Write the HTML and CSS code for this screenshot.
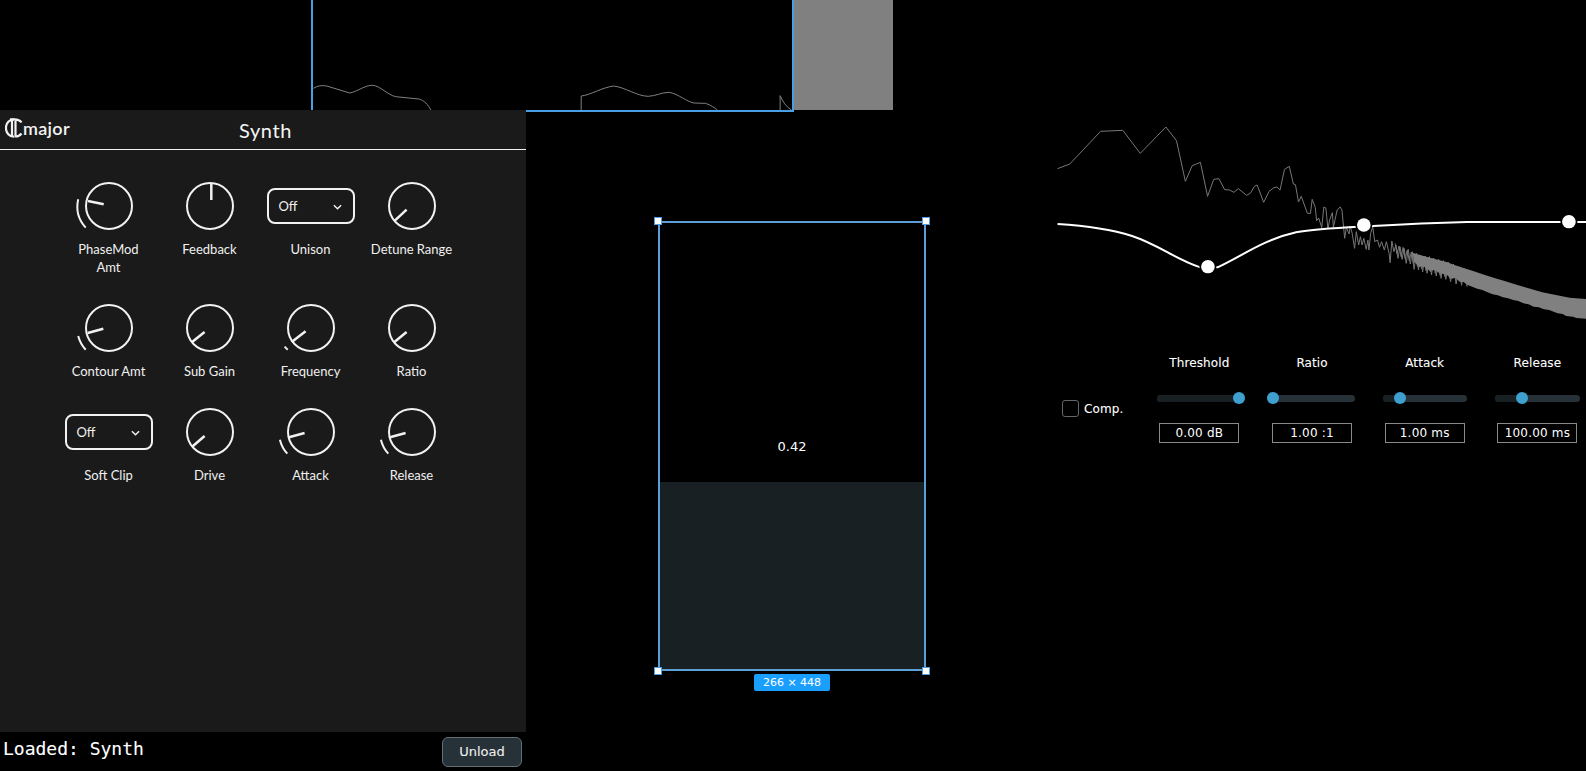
FILE: index.html
```html
<!DOCTYPE html>
<html lang="en">
<head>
  <meta charset="UTF-8">
  <title>Synth</title>
  <link rel="stylesheet" href="styles.css">
</head>
<body>
  <div class="stage">

    <!-- waveform -->
    <div class="wave-pane">
      <div class="wave-box">
        <svg class="wave-svg" viewBox="34 0 1252 330" preserveAspectRatio="none">
          <path d="M35,265 C45,258 55,255 70,258 L130,279 C150,275 170,255 190,256 C210,258 230,285 250,290 L310,297 C325,300 335,315 342,330"/>
          <path d="M735,330 L735,288 C760,285 790,262 820,258 C850,262 880,288 910,289 C930,288 945,277 965,277 C990,282 1010,305 1030,309 L1060,310 C1075,315 1085,325 1091,330"/>
          <path d="M1255,330 L1255,287 C1262,305 1270,320 1285,330"/>
        </svg>
      </div>
      <div class="wave-rest"></div>
    </div>

    <!-- synth panel -->
    <section class="synth">
      <header class="synth-head">
        <div class="logo">
          <svg class="logo-mark" viewBox="0 0 18 20">
            <path d="M9,1.3 A8,8.6 0 1 0 9,18.7"/>
            <path d="M5,1.3 H9 C12,1.3 15,2 16.5,4.5 M7,1.5 V18 M10.5,1.5 V18.5 C13,18.5 15,17.5 16.5,15.5"/>
          </svg>
          <span>major</span>
        </div>
        <div class="synth-title">Synth</div>
        <div></div>
      </header>

      <div class="controls">
        <div class="control">
          <svg class="knob" viewBox="-24 -24 48 48">
            <circle r="23"/>
            <path class="arc" d="M-23.3,21.7 A31.8,31.8 0 0 1 -30.8,-6.7"/>
            <path class="hand" d="M-21,-5 L-5.3,-1.7"/>
          </svg>
          <div class="control-label">PhaseMod<br>Amt</div>
        </div>
        <div class="control">
          <svg class="knob" viewBox="-24 -24 48 48">
            <circle r="23"/>
            <path class="hand" d="M1.3,-22 V-6"/>
          </svg>
          <div class="control-label">Feedback</div>
        </div>
        <div class="control">
          <div class="select-wrap">
            <div class="select">
              <span>Off</span>
              <svg class="chevron" viewBox="0 0 10 6"><path d="M1,1 L5,5 L9,1"/></svg>
            </div>
          </div>
          <div class="control-label">Unison</div>
        </div>
        <div class="control">
          <svg class="knob" viewBox="-24 -24 48 48">
            <circle r="23"/>
            <path class="hand" d="M-17.2,14.7 L-5.4,3.7"/>
          </svg>
          <div class="control-label">Detune Range</div>
        </div>

        <div class="control">
          <svg class="knob" viewBox="-24 -24 48 48">
            <circle r="23"/>
            <path class="arc" d="M-23.3,21.7 A31.8,31.8 0 0 1 -30.8,8"/>
            <path class="hand" d="M-21.3,5 L-5.7,0.7"/>
          </svg>
          <div class="control-label">Contour Amt</div>
        </div>
        <div class="control">
          <svg class="knob" viewBox="-24 -24 48 48">
            <circle r="23"/>
            <path class="hand" d="M-17.9,14 L-5.4,4"/>
          </svg>
          <div class="control-label">Sub Gain</div>
        </div>
        <div class="control">
          <svg class="knob" viewBox="-24 -24 48 48">
            <circle r="23"/>
            <path class="arc" d="M-23.3,21.7 A31.8,31.8 0 0 1 -26.4,18.7"/>
            <path class="hand" d="M-19.3,14 L-5.4,3.3"/>
          </svg>
          <div class="control-label">Frequency</div>
        </div>
        <div class="control">
          <svg class="knob" viewBox="-24 -24 48 48">
            <circle r="23"/>
            <path class="hand" d="M-17.9,14.3 L-5.4,4"/>
          </svg>
          <div class="control-label">Ratio</div>
        </div>

        <div class="control">
          <div class="select-wrap">
            <div class="select">
              <span>Off</span>
              <svg class="chevron" viewBox="0 0 10 6"><path d="M1,1 L5,5 L9,1"/></svg>
            </div>
          </div>
          <div class="control-label">Soft Clip</div>
        </div>
        <div class="control">
          <svg class="knob" viewBox="-24 -24 48 48">
            <circle r="23"/>
            <path class="hand" d="M-17.9,14.7 L-5.4,4"/>
          </svg>
          <div class="control-label">Drive</div>
        </div>
        <div class="control">
          <svg class="knob" viewBox="-24 -24 48 48">
            <circle r="23"/>
            <path class="arc" d="M-23.7,21.7 A32,32 0 0 1 -31.1,7.7"/>
            <path class="hand" d="M-22,5.3 L-6.4,1"/>
          </svg>
          <div class="control-label">Attack</div>
        </div>
        <div class="control">
          <svg class="knob" viewBox="-24 -24 48 48">
            <circle r="23"/>
            <path class="arc" d="M-23.7,21.7 A32,32 0 0 1 -31.1,7.7"/>
            <path class="hand" d="M-22,5.3 L-6.4,1"/>
          </svg>
          <div class="control-label">Release</div>
        </div>
      </div>
    </section>

    <!-- resizable value box -->
    <div class="resize-pane">
      <div class="resize-box">
        <div class="resize-value">0.42</div>
        <div class="resize-fill" style="height: 42%"></div>
        <span class="handle handle-tl"></span>
        <span class="handle handle-tr"></span>
        <span class="handle handle-bl"></span>
        <span class="handle handle-br"></span>
      </div>
      <div class="size-badge">266 × 448</div>
    </div>

    <!-- eq + compressor -->
    <div class="eq-pane">
      <svg class="eq-svg" viewBox="0 0 1568 660" preserveAspectRatio="none">
        <polyline class="spectrum" points="22,176 58,162 148,64 213,61 264,130 339,51 370,92 396,214 416,167 440,157 461,259 479,208 494,206 511,239 525,240 538,247 551,236 575,256 586,250 598,229 606,225 625,277 641,244 655,233 664,231 673,240 686,178 700,169 712,222 718,224 727,276 735,259 753,310 762,310 767,268 776,292 780,332 786,324 795,353 801,291 807,294 813,357 818,330 826,308 829,352 840,300 849,291 854,300 862,385 867,352 875,372 878,348 884,370 891,415 896,365 903,405 908,380 913,405 918,385 925,418 930,390 933,420 938,370 944,350 950,395 958,390 964,412 970,395 978,420 984,395 992,430 995,458 1000,393 1006,425 1012,405 1018,445 1024,410 1030,448 1036,415 1042,460 1048,418 1054,462 1060,425 1065,478 1072,430 1078,480 1084,435 1090,486 1097,438 1103,490 1110,440 1116,495 1123,445 1130,498 1137,448 1144,505 1151,452 1158,508 1165,456 1172,515 1180,462 1188,522 1196,470 1204,526 1212,476 1220,530"/>
        <polyline class="spectrum" points="1010,400 1015,432 1021,408 1027,440 1033,412 1039,446 1045,420 1051,452 1057,426 1063,462 1069,432 1075,470 1081,436 1087,476 1094,440 1100,482 1107,442 1113,486 1120,446 1127,490 1134,450 1141,496 1148,454 1155,500 1162,458 1169,506"/>
        <polygon class="spectrum-band" points="1060,428 1100,440 1160,456 1185,466 1210,474 1240,484 1270,494 1300,504 1330,513 1360,523 1400,535 1440,547 1480,555 1520,563 1568,567 1568,626 1540,624 1530,620 1510,618 1500,612 1485,610 1460,600 1445,598 1430,592 1415,590 1400,583 1385,580 1370,573 1355,570 1340,565 1325,562 1310,556 1295,553 1280,547 1265,540 1250,536 1235,530 1220,524 1210,516 1200,516 1185,504 1175,506 1160,494 1140,490 1125,480 1110,482 1095,470 1080,470 1065,455"/>
        <path class="curve" d="M22,342 C100,347 170,355 240,378 C320,405 370,450 440,472 L490,472 C560,440 620,390 720,367 C780,355 850,353 945,348 C1050,342 1150,338 1220,336 L1568,336"/>
        <circle class="node" cx="462" cy="470" r="20"/>
        <circle class="node" cx="918" cy="345" r="20"/>
        <circle class="node" cx="1518" cy="335" r="20"/>
      </svg>

      <div class="comp">
        <label class="comp-toggle"><span class="checkbox"></span>Comp.</label>
        <div class="comp-params">
          <div class="param">
            <div class="param-label">Threshold</div>
            <div class="track track-threshold"><div class="track-fill" style="width: 100%"></div><span class="thumb" style="left: 93%"></span></div>
            <div class="param-value">0.00 dB</div>
          </div>
          <div class="param">
            <div class="param-label">Ratio</div>
            <div class="track track-ratio"><div class="track-fill" style="width: 7%"></div><span class="thumb" style="left: 7%"></span></div>
            <div class="param-value">1.00 :1</div>
          </div>
          <div class="param">
            <div class="param-label">Attack</div>
            <div class="track track-attack"><div class="track-fill" style="width: 20%"></div><span class="thumb" style="left: 20%"></span></div>
            <div class="param-value">1.00 ms</div>
          </div>
          <div class="param">
            <div class="param-label">Release</div>
            <div class="track track-release"><div class="track-fill" style="width: 32%"></div><span class="thumb" style="left: 32%"></span></div>
            <div class="param-value">100.00 ms</div>
          </div>
        </div>
      </div>
    </div>

    <!-- status -->
    <footer class="status">
      <div class="status-text">Loaded: Synth</div>
      <button class="unload">Unload</button>
    </footer>
  </div>
</body>
</html>
```

FILE: styles.css
```css
html, body { margin: 0; padding: 0; height: 100%; background: #000; overflow: hidden; }
body { font-family: "DejaVu Sans", sans-serif; color: #fff; }

.stage {
  display: grid;
  grid-template-columns: 526px 524px 536px;
  grid-template-rows: 110px 622px 39px;
  height: 771px;
}

/* waveform */
.wave-pane { grid-column: 1 / 3; grid-row: 1; display: flex; align-items: flex-start; margin-left: 311px; }
.wave-box { width: 483px; height: 112px; box-sizing: border-box; border: 2px solid #4a9ee6; border-top: none; flex: none; }
.wave-svg { display: block; width: 479px; height: 110px; }
.wave-svg path { fill: none; stroke: #808080; stroke-width: 1; vector-effect: non-scaling-stroke; }
.wave-rest { width: 99px; height: 110px; background: #808080; }

/* synth panel */
.synth { grid-column: 1; grid-row: 2; background: #1a1a1a; position: relative; }
.synth-head { display: grid; grid-template-columns: 1fr auto 1fr; align-items: center; height: 39px; border-bottom: 1.5px solid #f2f2f2; padding-left: 5px; }
.logo { display: flex; align-items: center; font-family: Lato, sans-serif; font-weight: 600; font-size: 18px; letter-spacing: .3px; color: #f2f2f2; margin-top: -4px; }
.logo-mark { width: 18px; height: 20px; flex: none; }
.logo-mark path { fill: none; stroke: #f2f2f2; stroke-width: 2.2; }
.synth-title { font-family: Lato, sans-serif; font-size: 20px; letter-spacing: .6px; color: #f5f5f5; }

.controls { display: grid; grid-template-columns: repeat(4, 101px); row-gap: 28px; padding: 32px 0 0 58px; }
.control { display: flex; flex-direction: column; align-items: center; }
.control-label { margin-top: 10px; font-family: Lato, sans-serif; font-size: 13px; line-height: 18px; text-align: center; color: #f0f0f0; white-space: nowrap; }

.knob { width: 48px; height: 48px; overflow: visible; display: block; }
.knob circle { fill: none; stroke: #f2f2f2; stroke-width: 2; }
.knob .hand { fill: none; stroke: #f2f2f2; stroke-width: 2.5; }
.knob .arc { fill: none; stroke: #f2f2f2; stroke-width: 2; }

.select-wrap { height: 48px; display: flex; align-items: center; }
.select { width: 88px; height: 36px; box-sizing: border-box; border: 2px solid #f2f2f2; border-radius: 8px; display: flex; align-items: center; justify-content: space-between; padding: 0 11px 0 10px; font-family: Lato, sans-serif; font-size: 13px; color: #f0f0f0; }
.chevron { width: 9px; height: 6px; margin-top: 2px; }
.chevron path { fill: none; stroke: #f2f2f2; stroke-width: 1.6; }

/* resize box */
.resize-pane { grid-column: 2; grid-row: 2 / 4; display: flex; flex-direction: column; align-items: center; padding: 111px 0 0 132px; width: 268px; }
.resize-box { position: relative; width: 268px; height: 450px; box-sizing: border-box; border: 2px solid #5b9fd6; flex: none; display: flex; align-items: center; justify-content: center; }
.resize-value { font-size: 13px; }
.resize-fill { position: absolute; left: 0; right: 0; bottom: 0; background: #182024; }
.handle { position: absolute; width: 6px; height: 6px; background: #fff; border: 1px solid #4a9ee6; }
.handle-tl { left: -6px; top: -6px; }
.handle-tr { right: -6px; top: -6px; }
.handle-bl { left: -6px; bottom: -6px; }
.handle-br { right: -6px; bottom: -6px; }
.size-badge { margin-top: 3px; width: 76px; height: 17px; line-height: 17px; text-align: center; font-size: 11px; background: #1a9fff; border-radius: 2px; color: #fff; }

/* eq */
.eq-pane { grid-column: 3; grid-row: 2; }
.eq-svg { display: block; width: 536px; height: 220px; }
.spectrum { fill: none; stroke: #777; stroke-width: 1; vector-effect: non-scaling-stroke; }
.spectrum-band { fill: #808080; }
.curve { fill: none; stroke: #fff; stroke-width: 2; vector-effect: non-scaling-stroke; }
.node { fill: #fff; stroke: #000; stroke-width: 10; paint-order: stroke; }

.comp { display: flex; margin-top: 26px; font-size: 12px; letter-spacing: .1px; }
.comp-toggle { display: flex; align-items: center; gap: 5px; align-self: flex-end; margin: 0 0 26px 12px; width: 81px; flex: none; -webkit-text-stroke: .1px; }
.checkbox { width: 15px; height: 15px; border: 1px solid #666; border-radius: 3px; flex: none; }
.comp-params { display: grid; grid-template-columns: repeat(4, 112.7px); }
.param { display: flex; flex-direction: column; align-items: center; }
.param-label { line-height: 14px; -webkit-text-stroke: .1px; }
.track { position: relative; height: 7px; margin-top: 25px; border-radius: 4px; background: #263238; width: 88px; }
.track-threshold { margin-left: 3px; }
.track-ratio { margin-left: -3px; }
.track-attack { width: 84px; }
.track-release { width: 85px; }
.track-fill { height: 100%; background: #182024; border-radius: 4px; }
.thumb { position: absolute; top: -3px; width: 12px; height: 12px; margin-left: -6px; border-radius: 50%; background: #3fa0cf; }
.param-value { margin-top: 21px; width: 80px; height: 20px; box-sizing: border-box; border: 1px solid #8a8a8a; line-height: 18px; text-align: center; letter-spacing: .2px; }

/* status */
.status { grid-column: 1; grid-row: 3; display: flex; align-items: center; justify-content: space-between; padding: 0 4px 0 3px; }
.status-text { font-family: "DejaVu Sans Mono", monospace; font-size: 18px; margin-top: -6px; -webkit-text-stroke: .1px; }
.unload { width: 80px; height: 30px; font-family: "DejaVu Sans", sans-serif; font-size: 13px; color: #eee; background: #263238; border: 1px solid #5f7078; border-radius: 6px; -webkit-text-stroke: .1px; }
```
